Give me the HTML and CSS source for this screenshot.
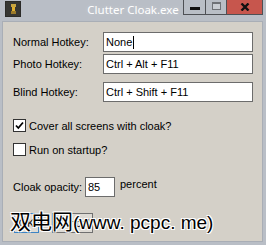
FILE: index.html
```html
<!DOCTYPE html>
<html lang="en">
<head>
    <meta charset="UTF-8">
    <title>Clutter Cloak.exe</title>
    <link rel="stylesheet" href="styles.css">
</head>
<body>
    <div class="window">
        <div class="titlebar">
            <div class="app-icon">
                <svg width="16" height="16" viewBox="0 0 16 16">
                    <rect width="16" height="16" fill="#2b2b28"/>
                    <rect x="1" y="1" width="14" height="14" fill="#363632"/>
                    <rect x="6" y="3" width="5" height="3" fill="#c8a640"/>
                    <rect x="7" y="6" width="3" height="4" fill="#e0b030"/>
                    <rect x="6" y="10" width="5" height="3" fill="#9a7a2a"/>
                </svg>
            </div>
            <div class="title">Clutter Cloak.exe</div>
            <div class="controls">
                <div class="ctl ctl-min"><span class="min-bar"></span></div>
                <div class="ctl ctl-max"><span class="max-box"></span></div>
                <div class="ctl ctl-close">
                    <svg width="10" height="8" viewBox="0 0 10 8">
                        <path d="M1.5 0.5 L8.5 7.5 M8.5 0.5 L1.5 7.5" stroke="#111" stroke-width="2.4"/>
                    </svg>
                </div>
            </div>
        </div>

        <div class="client">
            <div class="row">
                <label class="label">Normal Hotkey:</label>
                <div class="textbox">None<span class="caret"></span></div>
            </div>
            <div class="row row-photo">
                <label class="label">Photo Hotkey:</label>
                <div class="textbox">Ctrl + Alt + F11</div>
            </div>
            <div class="row row-blind">
                <label class="label">Blind Hotkey:</label>
                <div class="textbox">Ctrl + Shift + F11</div>
            </div>

            <div class="check-row check-cover">
                <span class="checkbox">
                    <svg width="11" height="11" viewBox="0 0 11 11">
                        <path d="M2 5.5 L4.3 8 L9 2.5" fill="none" stroke="#000" stroke-width="1.8"/>
                    </svg>
                </span>
                <span>Cover all screens with cloak?</span>
            </div>
            <div class="check-row check-startup">
                <span class="checkbox"></span>
                <span>Run on startup?</span>
            </div>

            <div class="opacity-row">
                <label class="label-opacity">Cloak opacity:</label>
                <div class="textbox small">85</div>
                <span class="percent">percent</span>
            </div>

            <div class="buttons">
                <button class="btn btn-ok">OK</button>
                <button class="btn btn-cancel">Cancel</button>
            </div>

            <div class="watermark"><span class="cjk">双电网</span>(www. pcpc. me)</div>
        </div>
    </div>
</body>
</html>
```

FILE: styles.css
```css
/* Window chrome */
body {
    margin: 0;
    background-color: #b9bec6;
    font-family: "Liberation Sans", Arial, sans-serif;
    font-size: 11px;
    color: #000;
}

.window {
    width: 266px;
    height: 245px;
    display: flex;
    flex-direction: column;
    background-color: #b9bec6;
}

.titlebar {
    height: 21px;
    display: grid;
    grid-template-columns: 1fr auto 1fr;
    align-items: start;
}

.app-icon {
    margin: 1px 0 0 5px;
    width: 16px;
    height: 16px;
}

.app-icon svg {
    display: block;
}

.title {
    font-family: "Noto Sans", sans-serif;
    font-size: 11.5px;
    color: #fff;
    line-height: 14px;
    padding-top: 3px;
    text-shadow: 0 0 4px rgba(255, 255, 255, 0.3);
}

.controls {
    justify-self: end;
    margin-right: 3px;
    display: flex;
    height: 14px;
    border: 1px solid #4e5055;
    border-top: none;
}

.ctl {
    display: flex;
    align-items: center;
    justify-content: center;
}

.ctl-min {
    width: 21px;
    border-right: 1px solid #4e5055;
}

.ctl-max {
    width: 20px;
    border-right: 1px solid #4e5055;
}

.ctl-close {
    width: 35px;
    background-color: #c7564d;
}

.min-bar {
    width: 10px;
    height: 3px;
    margin-top: 2px;
    background-color: #111;
}

.max-box {
    width: 7px;
    height: 5px;
    margin-top: -2px;
    border: 1px solid #6f7277;
    border-top-width: 2px;
    background-color: #c9cdd3;
}

/* Dialog body */
.client {
    position: relative;
    flex: 1;
    margin: 0 3px 3px 2px;
    border: 1px solid #a9aeb6;
    background-color: #d4d0c8;
    padding: 10px 0 0 10px;
}

.row {
    display: flex;
    align-items: center;
    height: 20px;
}

.row-photo {
    margin-top: 2px;
}

.row-blind {
    margin-top: 8px;
}

.label {
    width: 90px;
}

.textbox {
    box-sizing: border-box;
    width: 150px;
    height: 20px;
    border: 1px solid #6c6c6c;
    background-color: #fff;
    padding: 0 2px;
    line-height: 18px;
    white-space: nowrap;
    display: flex;
    align-items: center;
}

.textbox.small {
    width: 30px;
}

.caret {
    display: inline-block;
    width: 1px;
    height: 13px;
    margin-left: 1px;
    background-color: #000;
}

.check-row {
    display: flex;
    align-items: center;
    height: 13px;
    gap: 3px;
}

.check-cover {
    margin-top: 17px;
}

.check-startup {
    margin-top: 11px;
}

.checkbox {
    box-sizing: border-box;
    width: 13px;
    height: 13px;
    border: 1px solid #333;
    background-color: #fff;
    display: flex;
    align-items: center;
    justify-content: center;
}

.checkbox svg {
    display: block;
}

.opacity-row {
    display: flex;
    align-items: center;
    height: 20px;
    margin-top: 21px;
}

.label-opacity {
    width: 72px;
}

.percent {
    margin: 0 0 6px 5px;
}

.buttons {
    display: flex;
    margin: 16px 0 0 1px;
    gap: 13px;
}

.btn {
    box-sizing: border-box;
    height: 20px;
    padding: 0;
    font-family: "Liberation Sans", Arial, sans-serif;
    font-size: 11px;
    background-color: #dedbd5;
    border: 1px solid #707070;
}

.btn-ok {
    width: 25px;
    border-color: #3c84c4;
}

.btn-cancel {
    width: 41px;
}

/* Site watermark stamped over the screenshot */
.watermark {
    position: absolute;
    left: 7px;
    top: 186px;
    font-family: "Liberation Sans", Arial, sans-serif;
    font-size: 19px;
    line-height: 24px;
    color: #000;
    white-space: nowrap;
    text-shadow: -1px -1px 0 #fff, 1px -1px 0 #fff, -1px 1px 0 #fff, 1px 1px 0 #fff;
}

.watermark .cjk {
    font-family: "Noto Sans CJK SC", sans-serif;
    font-size: 21px;
}
```
